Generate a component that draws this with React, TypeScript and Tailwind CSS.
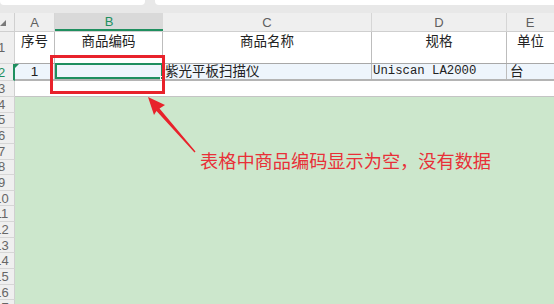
import React from "react";

const cjk = { fontFamily: '"Liberation Sans", "Noto Sans CJK SC", sans-serif' };

function RowLabel({ n, h, active }: { n: number; h: string; active?: boolean }) {
  return (
    <div
      className={`${h} w-[15px] shrink-0 overflow-hidden bg-[#efefef] border-b border-[#d6d6d6] flex items-center ${
        active ? "border-r-2 border-r-[#1f8f5f]" : "border-r border-r-[#d0d0d0]"
      }`}
    >
      <span
        className={`ml-[-13.5px] w-[30px] shrink-0 text-center text-[13px] leading-none ${
          active ? "text-[#1f8f5f]" : "text-[#666]"
        }`}
      >
        {n}
      </span>
    </div>
  );
}

export default function App() {
  const greenRows = [4, 5, 6, 7, 8, 9, 10, 11, 12, 13, 14, 15, 16, 17];
  return (
    <div className="relative w-[554px] h-[304px] overflow-hidden bg-[#efefef]" style={cjk}>
      {/* top strip */}
      <div className="h-[13px] flex gap-[10px] bg-[#e8e8e8]">
        <div className="w-[145px] h-[5px] bg-white rounded-b-[4px]" />
        <div className="flex-1 h-[5px] bg-white rounded-bl-[4px]" />
      </div>

      {/* column header */}
      <div className="h-[18px] flex text-[13px] text-[#5f5f5f] leading-none">
        <div className="w-[15px] shrink-0 relative border-r border-[#d0d0d0]">
          <div className="absolute left-0 top-[7px] w-0 h-0 border-l-[6px] border-l-transparent border-b-[6px] border-b-[#7a7a7a]" />
        </div>
        <div className="w-[40px] shrink-0 flex items-center justify-center border-r border-[#d6d6d6]">A</div>
        <div className="w-[108px] shrink-0 flex items-center justify-center bg-[#d9d9d9] border-b-2 border-[#1f8f5f] text-[#1f8f5f]">
          B
        </div>
        <div className="w-[209px] shrink-0 flex items-center justify-center border-r border-[#d6d6d6]">C</div>
        <div className="w-[135px] shrink-0 flex items-center justify-center border-r border-[#d6d6d6]">D</div>
        <div className="flex-1 flex items-center justify-center pr-[1px]">E</div>
      </div>

      {/* row 1 */}
      <div className="flex h-[33px] border-t border-[#cfcfcf]">
        <RowLabel n={1} h="h-[32px]" />
        <div className="flex flex-1 bg-white border-b border-[#a8a8a8] text-[13.5px] text-[#222] leading-none">
          <div className="w-[40px] shrink-0 flex justify-center pt-[3px] border-r border-[#bdbdbd]">序号</div>
          <div className="w-[108px] shrink-0 flex justify-center pt-[3px] border-r border-[#bdbdbd]">商品编码</div>
          <div className="w-[209px] shrink-0 flex justify-center pt-[3px] border-r border-[#bdbdbd]">商品名称</div>
          <div className="w-[135px] shrink-0 flex justify-center pt-[3px] border-r border-[#bdbdbd]">规格</div>
          <div className="flex-1 flex justify-center pt-[3px]">单位</div>
        </div>
      </div>

      {/* row 2 */}
      <div className="flex h-[17px]">
        <RowLabel n={2} h="h-[17px]" active />
        <div className="flex flex-1 bg-[#eef5fc] border-b-2 border-[#b4b4b4] text-[13.5px] text-[#222] leading-none">
          <div className="relative w-[40px] shrink-0 flex items-center justify-center border-r border-[#bdbdbd]">
            <div className="absolute left-0 top-0 w-0 h-0 border-t-[4px] border-t-[#1f8f5f] border-r-[4px] border-r-transparent" />
            1
          </div>
          <div className="relative w-[108px] shrink-0 border-2 border-[#1f8f5f] -mt-[1px]">
            <div className="absolute right-[-3px] bottom-[-3px] w-[4px] h-[4px] bg-[#1f8f5f] border border-white" />
          </div>
          <div className="w-[209px] shrink-0 flex items-center pl-[2px] border-r border-[#bdbdbd]">紫光平板扫描仪</div>
          <div
            className="w-[135px] shrink-0 flex items-center pl-[1px] border-r border-[#bdbdbd] text-[12.3px]"
            style={{ fontFamily: '"Liberation Mono", monospace' }}
          >
            Uniscan LA2000
          </div>
          <div className="flex-1 flex items-center pl-[3px]">台</div>
        </div>
      </div>

      {/* row 3 */}
      <div className="flex h-[16px]">
        <RowLabel n={3} h="h-[16px]" />
        <div className="flex-1 bg-white border-b border-[#c4c4c4]" />
      </div>

      {/* green rows */}
      <div className="flex">
        <div className="flex flex-col">
          {greenRows.map((n) => (
            <RowLabel key={n} n={n} h="h-[15.65px]" />
          ))}
        </div>
        <div className="flex-1 bg-[#cce7cc]" />
      </div>

      {/* annotation: red box */}
      <div className="absolute left-[50px] top-[55px] w-[115px] h-[39px] border-[3px] border-[#e8222b]" />

      {/* annotation: arrow */}
      <svg className="absolute left-0 top-0" width="554" height="304" viewBox="0 0 554 304">
        <polygon
          points="148,97 165,105 159.5,108.5 195.5,151.5 194.5,152.5 156.5,111 154,115"
          fill="#e8222b"
        />
      </svg>

      {/* annotation: text */}
      <div
        className="absolute left-[200px] top-[148px] text-[18.2px] leading-[24px] text-[#e83038] whitespace-nowrap"
        style={{ fontFamily: '"Noto Sans CJK SC", sans-serif' }}
      >
        表格中商品编码显示为空，没有数据
      </div>
    </div>
  );
}
